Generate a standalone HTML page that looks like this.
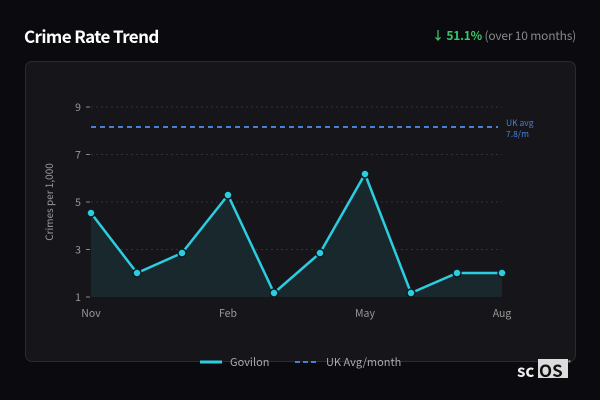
<!DOCTYPE html><html><head><style>
body{margin:0;width:600px;height:400px;background:#0b0b0f;font-family:"Noto Sans CJK JP","Liberation Sans",sans-serif;overflow:hidden;position:relative}
.t{position:absolute;left:24px;top:23px;color:#fff;font-weight:bold;font-size:17px;letter-spacing:-0.6px;line-height:26px}
.r{position:absolute;right:24px;top:27px;font-size:12px;color:#888;line-height:18px;letter-spacing:-0.2px}
.r b{color:#3cc765}
.card{position:absolute;left:25px;top:61px;width:549px;height:299px;background:#16161a;border:1px solid #2a2a30;border-radius:7px}
</style></head><body>
<div class="t">Crime Rate Trend</div>
<div class="r"><b>↓ 51.1%</b> (over 10 months)</div>
<div class="card"></div>
<svg style="position:absolute;left:0;top:0" width="600" height="400" font-family="Noto Sans CJK JP, sans-serif">
<g stroke="#333" stroke-dasharray="2,3" stroke-width="1">
<line x1="91" y1="107" x2="502" y2="107"/><line x1="91" y1="154.5" x2="502" y2="154.5"/><line x1="91" y1="202" x2="502" y2="202"/><line x1="91" y1="249.5" x2="502" y2="249.5"/></g>
<g stroke="#888"><line x1="86" y1="107" x2="90" y2="107"/><line x1="86" y1="154.5" x2="90" y2="154.5"/><line x1="86" y1="202" x2="90" y2="202"/><line x1="86" y1="249.5" x2="90" y2="249.5"/><line x1="86" y1="297" x2="90" y2="297"/></g>
<g fill="#999" font-size="10.5" text-anchor="end"><text x="81" y="111">9</text><text x="81" y="158.5">7</text><text x="81" y="206">5</text><text x="81" y="253.5">3</text><text x="81" y="301">1</text></g>
<text transform="translate(53,202) rotate(-90)" fill="#999" font-size="10" text-anchor="middle">Crimes per 1,000</text>
<g fill="#999" font-size="10.5" text-anchor="middle"><text x="91" y="317">Nov</text><text x="228" y="317">Feb</text><text x="365" y="317">May</text><text x="502" y="317">Aug</text></g>
<line x1="91" y1="127" x2="498" y2="127" stroke="#4a7fd6" stroke-width="2" stroke-dasharray="5,4"/>
<text x="506" y="126" fill="#4a7fd6" font-size="8.5">UK avg</text><text x="506" y="137" fill="#4a7fd6" font-size="8.5">7.8/m</text>
<polygon fill="#1a2a30" opacity="0.9" points="91,297 91,213 137,273 182,253 228,195 274,293 320,253 365,174 411,293 457,273 502,273 502,297"/>
<polyline fill="none" stroke="#2ccde0" stroke-width="2.5" stroke-linejoin="round" points="91,213 137,273 182,253 228,195 274,293 320,253 365,174 411,293 457,273 502,273"/>
<g fill="#2ccde0" stroke="#0e1a1e" stroke-width="1.5"><circle cx="91" cy="213" r="4"/><circle cx="137" cy="273" r="4"/><circle cx="182" cy="253" r="4"/><circle cx="228" cy="195" r="4"/><circle cx="274" cy="293" r="4"/><circle cx="320" cy="253" r="4"/><circle cx="365" cy="174" r="4"/><circle cx="411" cy="293" r="4"/><circle cx="457" cy="273" r="4"/><circle cx="502" cy="273" r="4"/></g>
<line x1="200" y1="362" x2="222" y2="362" stroke="#2ccde0" stroke-width="3"/>
<text x="230" y="366" fill="#aaa" font-size="11">Govilon</text>
<line x1="295" y1="362" x2="318" y2="362" stroke="#4a7fd6" stroke-width="2" stroke-dasharray="5,3"/>
<text x="326" y="366" fill="#aaa" font-size="11">UK Avg/month</text>
<rect x="538" y="359" width="30" height="19" fill="#ddd"/>
<text x="517" y="377" fill="#eee" font-size="17" font-weight="bold">sc</text>
<text x="539" y="377" fill="#111" font-size="17" font-weight="bold">OS</text>
<text x="568" y="365" fill="#ccc" font-size="6">®</text>
</svg>
</body></html>
